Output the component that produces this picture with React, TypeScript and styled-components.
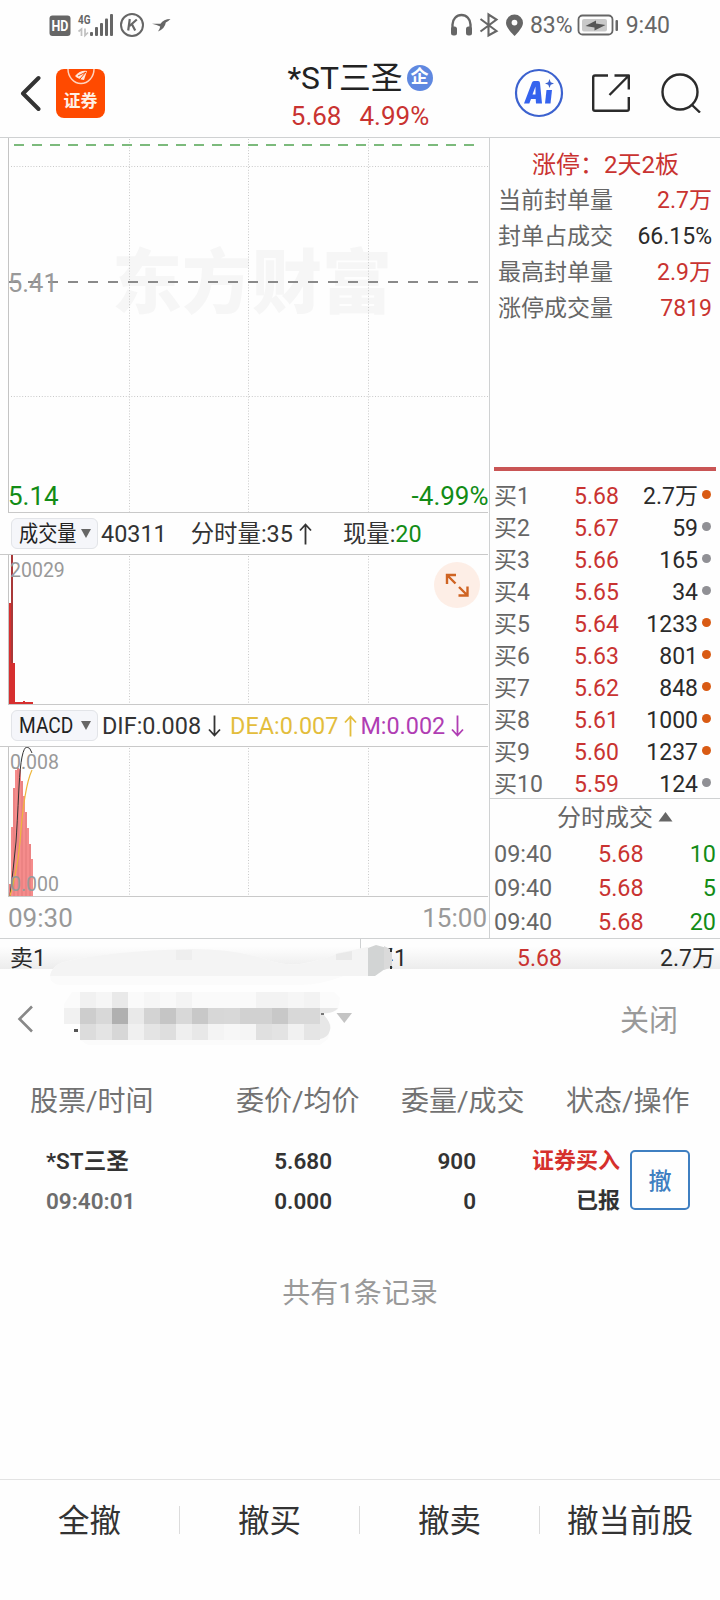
import React from "react";
import styled, { createGlobalStyle } from "styled-components";

const RED = "#c93331";
const GREEN = "#128c16";
const INK = "#2b2b2b";
const GRAY = "#666";
const LINE = "#cfd1d2";

const GlobalStyle = createGlobalStyle`
  *, *::before, *::after { box-sizing: border-box; }
  body {
    margin: 0;
    background: #fefefe;
    color: ${INK};
    font-family: Roboto, "Noto Sans CJK SC", sans-serif;
  }
  svg { display: block; flex: none; }
`;

const Screen = styled.main`
  width: 720px;
  height: 1600px;
  display: flex;
  flex-direction: column;
  overflow: hidden;
  background: #fefefe;
  white-space: nowrap;
`;

/* Status bar */
const StatusBar = styled.div`
  height: 48px;
  display: flex;
  align-items: center;
  justify-content: space-between;
  padding: 2px 50px 0 49px;
  color: #666;
  font-size: 23px;
  line-height: 24px;
`;
const StatusGroup = styled.div`
  display: flex;
  align-items: center;
`;
const StatusText = styled.span<{ $before: number; $after?: number }>`
  margin-left: ${(p) => p.$before}px;
  margin-right: ${(p) => p.$after ?? 0}px;
  padding-top: 1px;
`;

/* Title bar */
const TitleBar = styled.header`
  height: 90px;
  display: grid;
  grid-template-columns: 240px 240px 240px;
  border-bottom: 1px solid ${LINE};
`;
const TitleLeft = styled.div`
  display: flex;
  align-items: center;
  gap: 15px;
  padding: 2px 0 0 19px;
`;
const BrandTile = styled.div`
  width: 49px;
  height: 49px;
  border-radius: 8px;
  background: #ff4a00;
  overflow: hidden;
  display: flex;
  flex-direction: column;
  align-items: center;
  color: #fff;
`;
const BrandName = styled.span`
  font: 700 17px/20px "Noto Sans CJK SC", sans-serif;
  margin-top: 4px;
  color: #fff0e6;
`;
const TitleCenter = styled.div`
  display: flex;
  flex-direction: column;
  align-items: center;
  padding-top: 11px;
`;
const StockName = styled.div`
  display: flex;
  align-items: center;
  gap: 4px;
  height: 38px;
  font-size: 31.8px;
  line-height: 38px;
  color: #222;
`;
const EntBadge = styled.span`
  width: 26px;
  height: 26px;
  border-radius: 50%;
  background: #5f88e0;
  color: #fff;
  font-size: 18px;
  font-weight: 700;
  line-height: 24px;
  text-align: center;
`;
const Quote = styled.div`
  display: flex;
  gap: 18px;
  margin-top: 4px;
  font-size: 26px;
  line-height: 31px;
  color: ${RED};
`;
const TitleRight = styled.div`
  display: flex;
  align-items: center;
  justify-content: flex-end;
  padding-right: 19px;
`;
const IconSlot = styled.span<{ $right: number }>`
  margin-right: ${(p) => p.$right}px;
`;

/* Market area */
const Market = styled.section`
  height: 801px;
  display: grid;
  grid-template-columns: 490px 230px;
  border-bottom: 1px solid ${LINE};
`;
const ChartColumn = styled.div`
  display: flex;
  flex-direction: column;
  border-right: 1px solid ${LINE};
`;
const ChartPane = styled.div<{ $height: number }>`
  position: relative;
  height: ${(p) => p.$height}px;
  margin-left: 8px;
  margin-right: 1px;
  border-left: 1px solid #c4c4c4;
  border-bottom: 1px solid #c9c9c9;
`;
const Overlay = styled.span<{ $size: number; $color: string; $top?: number; $bottom?: number; $right?: boolean }>`
  position: absolute;
  ${(p) => (p.$right ? "right: -0.5px;" : p.$size > 20 ? "left: -1px;" : "left: 1px;")}
  ${(p) => (p.$top !== undefined ? `top: ${p.$top}px;` : "")}
  ${(p) => (p.$bottom !== undefined ? `bottom: ${p.$bottom}px;` : "")}
  font-size: ${(p) => p.$size}px;
  line-height: ${(p) => Math.round(p.$size + 3)}px;
  color: ${(p) => p.$color};
`;
const Watermark = styled.span`
  position: absolute;
  left: 103px;
  top: 101px;
  font-size: 70px;
  font-weight: 900;
  line-height: 90px;
  color: #f6f6f6;
`;
const Drawing = styled.svg`
  position: relative;
`;
const ExpandButton = styled.button`
  position: absolute;
  right: 8px;
  top: 7px;
  width: 46px;
  height: 46px;
  border: 0;
  border-radius: 50%;
  background: #fdeee6;
  padding: 11px;
`;
const IndicatorBar = styled.div<{ $height: number }>`
  height: ${(p) => p.$height}px;
  display: flex;
  align-items: center;
  padding-left: 11px;
  font-size: 23.4px;
  line-height: 28px;
  color: #333;
  margin-right: 1px;
  border-bottom: 1px solid #c9c9c9;
`;
const Picker = styled.div`
  width: 87px;
  height: 31px;
  border: 1px solid #e2e4e8;
  border-radius: 6px;
  background: #f5f6fa;
  display: flex;
  align-items: center;
  justify-content: space-between;
  padding: 0 6px 0 7px;
  color: #222;
`;
const PickerLabel = styled.span`
  width: 57px;
  font-size: 22px;
  line-height: 28px;
  transform: scaleX(0.87);
  transform-origin: left center;
`;
const Reading = styled.span<{ $left: number; $color?: string }>`
  display: flex;
  align-items: center;
  margin-left: ${(p) => p.$left}px;
  color: ${(p) => p.$color ?? "#333"};
`;
const TimeAxis = styled.div`
  display: flex;
  justify-content: space-between;
  padding: 6px 2px 0 8px;
  font-size: 26px;
  line-height: 30px;
  color: #999;
`;

/* Right column */
const SideColumn = styled.div`
  display: flex;
  flex-direction: column;
  font-size: 23px;
`;
const LimitPanel = styled.div`
  height: 333px;
  margin: 0 4px;
  padding: 9px 4px 0 4px;
  border-bottom: 4px solid #c95555;
`;
const LimitTitle = styled.div`
  height: 36px;
  line-height: 36px;
  font-size: 24px;
  padding-left: 34px;
  color: ${RED};
`;
const LimitRow = styled.div`
  height: 36px;
  line-height: 36px;
  display: flex;
  justify-content: space-between;
  color: ${GRAY};
`;
const Value = styled.span<{ $color?: string }>`
  color: ${(p) => p.$color ?? INK};
`;
const Book = styled.div`
  height: 328px;
  padding: 10px 8px 0 4px;
  border-bottom: 1px solid ${LINE};
`;
const BookRow = styled.div`
  height: 32px;
  display: grid;
  grid-template-columns: 80px 50px 1fr 14px;
  line-height: 32px;
  color: ${GRAY};
`;
const RightValue = styled.span<{ $color?: string }>`
  text-align: right;
  color: ${(p) => p.$color ?? INK};
`;
const Dot = styled.i<{ $hot: boolean }>`
  width: 9px;
  height: 9px;
  border-radius: 50%;
  justify-self: end;
  align-self: center;
  margin-bottom: 5px;
  margin-right: 1px;
  background: ${(p) => (p.$hot ? "#d95b14" : "#909095")};
`;
const TicksTitle = styled.div`
  height: 38px;
  display: flex;
  align-items: center;
  gap: 5px;
  padding: 0 0 0 67px;
  font-size: 24px;
  line-height: 32px;
  color: ${GRAY};
`;
const TickRow = styled.div`
  height: 34px;
  display: grid;
  grid-template-columns: 104px 50px 1fr;
  padding: 0 4px 0 4px;
  font-size: 23.4px;
  line-height: 35px;
  color: ${GRAY};
`;

/* Best bid/ask strip */
const BestStrip = styled.div`
  position: relative;
  height: 30px;
  display: grid;
  grid-template-columns: 360px 360px;
  font-size: 23px;
  line-height: 20px;
  background: linear-gradient(#fefefe 25%, #ececec);
`;
const BestHalf = styled.div<{ $divider?: boolean }>`
  height: 30px;
  display: grid;
  grid-template-columns: 146px 1fr auto;
  padding: 10px 5px 0 10px;
  border-left: ${(p) => (p.$divider ? `1px solid ${LINE}` : "0")};
`;
const Redaction = styled.svg`
  position: absolute;
  left: 0;
  top: 0;
`;

/* Order sheet */
const Sheet = styled.section`
  flex: 1;
  display: flex;
  flex-direction: column;
`;
const SheetHeader = styled.div`
  height: 103px;
  display: flex;
  justify-content: flex-end;
  padding: 0 42px 0 0;
`;
const CloseButton = styled.span`
  font-size: 29px;
  line-height: 104px;
  color: #999;
`;
const OrderHead = styled.div`
  height: 59px;
  display: flex;
  padding: 0 31px 0 30px;
  font-size: 28px;
  line-height: 60px;
  color: #727272;
`;
const HeadCell = styled.span<{ $width: number }>`
  width: ${(p) => p.$width}px;
`;
const OrderRow = styled.div`
  height: 100px;
  display: grid;
  grid-template-columns: 200px 86px 144px 144px 10px 60px;
  padding: 10px 30px 0 46px;
  font-size: 22.5px;
  font-weight: 600;
  line-height: 40px;
  color: #333;
`;
const OrderCell = styled.div<{ $right?: boolean }>`
  display: flex;
  flex-direction: column;
  align-items: ${(p) => (p.$right ? "flex-end" : "flex-start")};
`;
const OrderTime = styled.span`
  color: #6d6d6d;
`;
const OrderSide = styled.span`
  color: #d5302c;
  font-size: 22px;
`;
const OrderState = styled.span`
  font-size: 22px;
`;
const CancelButton = styled.button`
  grid-column: 6;
  width: 60px;
  height: 60px;
  margin-top: 9px;
  padding: 0 0 3px;
  border: 2px solid #3f7fc1;
  border-radius: 5px;
  background: transparent;
  color: #3f7fc1;
  font: 500 23px/30px "Noto Sans CJK SC", sans-serif;
`;
const Summary = styled.p`
  margin: 43px 0 0;
  text-align: center;
  font-size: 28px;
  line-height: 40px;
  color: #999;
`;
const ActionBar = styled.nav`
  height: 121px;
  margin-top: auto;
  display: grid;
  grid-template-columns: repeat(4, 180px);
  align-items: start;
  padding-top: 26px;
  border-top: 1px solid #e3e3e3;
`;
const Action = styled.span<{ $last?: boolean }>`
  height: 28px;
  font-size: 31.5px;
  line-height: 32px;
  text-align: center;
  color: #333;
  border-right: ${(p) => (p.$last ? "0" : "1px solid #dcdcdc")};
`;

const limitRows = [
  { label: "当前封单量", value: "2.7万", color: RED },
  { label: "封单占成交", value: "66.15%", color: INK },
  { label: "最高封单量", value: "2.9万", color: RED },
  { label: "涨停成交量", value: "7819", color: RED },
];

const bids: [string, string, boolean][] = [
  ["5.68", "2.7万", true],
  ["5.67", "59", false],
  ["5.66", "165", false],
  ["5.65", "34", false],
  ["5.64", "1233", true],
  ["5.63", "801", true],
  ["5.62", "848", true],
  ["5.61", "1000", true],
  ["5.60", "1237", true],
  ["5.59", "124", false],
];

const ticks: [string, string, string][] = [
  ["09:40", "5.68", "10"],
  ["09:40", "5.68", "5"],
  ["09:40", "5.68", "20"],
];

const macdBars = [12, 69, 108, 126, 128, 127, 115, 100, 84, 68, 52, 37];

const mosaic: string[][] = [
  ["#f1f1f1", "#f6f6f6", "#e9e9e9", "#fafafa", "#f6f6f6", "#f9f9f9", "#f4f4f4", "#fafafa", "#fafafa", "#fafafa", "#fafafa", "#f3f3f3", "#f3f3f3", "#f6f6f6", "#f3f3f3"],
  ["#cdcdcd", "#d8d8d8", "#b0b0b0", "#e9e9e9", "#d3d3d3", "#c5c5c5", "#d8d8d8", "#c8c8c8", "#d7d7d7", "#d8d8d8", "#d1d1d1", "#d1d1d1", "#c8c8c8", "#d8d8d8", "#d8d8d8"],
  ["#dcdcdc", "#e4e4e4", "#d7d7d7", "#f0f0f0", "#e4e4e4", "#dedede", "#efefef", "#e8e8e8", "#f4f4f4", "#f7f7f7", "#f5f5f5", "#e0e0e0", "#e3e3e3", "#f1f1f1", "#e5e5e5"],
];

function Grid({ height, rows = [] }: { height: number; rows?: number[] }) {
  return (
    <g stroke="#c9c9c9" strokeDasharray="1 1.8" fill="none">
      {[120.5, 239.5, 359.5].map((x) => (
        <path key={x} d={`M${x} 1V${height}`} />
      ))}
      {rows.map((y) => (
        <path key={y} d={`M2 ${y}H479`} />
      ))}
    </g>
  );
}

function Arrow({ up, left, color }: { up?: boolean; left: number; color: string }) {
  return (
    <svg width={13 + left} height="22" viewBox={`${-left} 0 ${13 + left} 22`} fill="none" stroke={color} strokeWidth="1.8">
      <path d={up ? "M6.5 21.5V1.5M1 7.500L6.5 1.5L12 7.500" : "M6.5 0.5V20.5M1 14.500L6.5 20.5L12 14.500"} />
    </svg>
  );
}

function DownCaret() {
  return (
    <svg width="10" height="9" viewBox="0 0 10 9">
      <path d="M0 0H10L5 9Z" fill="#666" />
    </svg>
  );
}

function StatusLeftIcons() {
  return (
    <svg width="124" height="26" viewBox="49 11 124 26">
      <rect x="49.500" y="14.500" width="21" height="20.500" rx="3" fill="#666" />
      <text x="60" y="30" fontSize="14" fontWeight="700" textAnchor="middle" fill="#fff" textLength="17" lengthAdjust="spacingAndGlyphs">HD</text>
      <text x="78" y="23" fontSize="13" fontWeight="700" fill="#666" textLength="12.500" lengthAdjust="spacingAndGlyphs">4G</text>
      <path d="M78.500 30.500L81.500 28V35M85 27.500V34.500L88 31.500" fill="none" stroke="#c0c0c0" strokeWidth="1.700" />
      <g fill="#666">
        <rect x="90" y="31" width="3" height="4" rx="1" />
        <rect x="95" y="26" width="3" height="9" rx="1" />
        <rect x="100" y="22" width="3" height="13" rx="1" />
        <rect x="105" y="17.500" width="3" height="17.500" rx="1" />
        <rect x="110" y="13" width="3" height="22" rx="1" />
      </g>
      <circle cx="132" cy="24" r="11" fill="none" stroke="#666" strokeWidth="2" />
      <path d="M129.800 18L128.200 29.500M136.800 18.500L129.500 25M131.800 23L135.200 29.500" fill="none" stroke="#666" strokeWidth="2.200" />
      <path d="M152 22.800H160.500Q163.500 18.200 170.500 18Q168.500 20 165.800 21.500Q165 27.500 158 30.500Q160 27.500 160.200 25.500Q157 24 152 22.800Z" fill="#666" />
    </svg>
  );
}

function StatusRightIcons() {
  return (
    <svg width="74" height="26" viewBox="452 11 74 26" fill="none" stroke="#666">
      <path d="M453.500 28V23.500a9 9.500 0 0 1 18 0V28" strokeWidth="2.400" />
      <rect x="452" y="25.500" width="6" height="9" rx="2.500" fill="#666" stroke="none" />
      <rect x="467" y="25.500" width="6" height="9" rx="2.500" fill="#666" stroke="none" />
      <path d="M481.500 18L497.500 30L489.500 34.500V13.500L497.500 18.500L481.500 30.500" strokeWidth="2.100" />
      <path fillRule="evenodd" d="M515.500 13.500a8.500 8.500 0 0 1 8.500 8.500c0 5-8.500 13-8.500 13s-8.500-8-8.500-13a8.500 8.500 0 0 1 8.500-8.500Zm0 5.200a2.900 2.900 0 1 0 0 5.800a2.900 2.900 0 0 0 0-5.800Z" fill="#666" stroke="none" />
    </svg>
  );
}

function Battery() {
  return (
    <svg width="41" height="22" viewBox="577 13 41 22">
      <rect x="578.500" y="14.500" width="34" height="19" rx="4" fill="none" stroke="#666" strokeWidth="1.800" />
      <rect x="582" y="18" width="25" height="12.500" rx="2" fill="#c9c9c9" />
      <path d="M585.500 25L596 19.500V22.500L605.500 24L594.500 29.500V26.500Z" fill="#555" />
      <rect x="615.500" y="19" width="2.500" height="11" rx="1" fill="#666" />
    </svg>
  );
}

function RedactionMarks() {
  return (
    <Redaction width="420" height="110" viewBox="0 939 420 110">
      <path d="M50 976Q52 964 68 961Q110 951 190 949Q232 949 262 958Q282 966 300 964Q325 960 338 953L368 947V976H344Q320 985 300 985H60Q50 984 50 976Z" fill="#fbfbfb" />
      <path d="M50 976Q52 964 68 961Q110 951 190 949Q232 949 262 958Q282 966 300 964Q325 960 338 953L368 947V976Z" fill="#f4f4f4" />
      <rect x="176" y="950" width="16" height="10" fill="#eeeeee" />
      <path d="M336 954L352 951V960H336Z" fill="#e9e9e9" />
      <path d="M368 948L376 945L387 948L392 955V964L375 976H368Z" fill="#d2d4d4" />
      <path d="M384 946L392 950V967L384 970Z" fill="#dadada" />
      <rect x="390" y="949" width="2" height="3" fill="#333" />
      <rect x="390" y="966" width="2" height="3" fill="#333" />
      <path d="M64 1007V1004L72 992H334L340 998L338 1010L324 1015L331 1025L328 1039L320 1045H88L80 1040V1024H64Z" fill="#fbfbfb" />
      <rect x="64" y="1008" width="16" height="16" fill="#f1f1f1" />
      {mosaic.map((row, r) =>
        row.map((fill, c) => <rect key={`${r}-${c}`} x={80 + c * 16} y={992 + r * 16} width="16" height="16" fill={fill} />)
      )}
      <path d="M320 1008H338Q334 1014 322 1013Q332 1023 330 1030Q328 1038 320 1039Z" fill="#e7e7e7" />
      <rect x="74" y="1029" width="4" height="3" fill="#555" />
      <rect x="321" y="1013" width="3" height="2" fill="#777" />
      <path d="M336.500 1013H352L344.300 1023Z" fill="#c4c4c4" />
      <path d="M32 1006.500L19.500 1019L32 1031.500" fill="none" stroke="#888" strokeWidth="2.600" />
    </Redaction>
  );
}

export default function App() {
  return (
    <Screen>
      <GlobalStyle />
      <StatusBar>
        <StatusGroup>
          <StatusLeftIcons />
        </StatusGroup>
        <StatusGroup>
          <StatusRightIcons />
          <StatusText $before={5} $after={4}>83%</StatusText>
          <Battery />
          <StatusText $before={8}>9:40</StatusText>
        </StatusGroup>
      </StatusBar>

      <TitleBar>
        <TitleLeft>
          <svg width="22" height="38" viewBox="0 0 22 38" fill="none" stroke="#333" strokeWidth="4" strokeLinecap="round" strokeLinejoin="round">
            <path d="M19.500 3L4 18.500L19.500 34" />
          </svg>
          <BrandTile>
            <svg width="30" height="17" viewBox="0 0 30 17" fill="none">
              <path d="M2 0A13 14.500 0 0 0 28 0" stroke="#ffd2bd" strokeWidth="1.500" />
              <path d="M9 7Q14 1 21 2L18 11Q12 10 9 7Z" fill="#ffe6da" />
              <path d="M12 7L20 3M14 10L20 3" stroke="#ff4a00" />
            </svg>
            <BrandName>证券</BrandName>
          </BrandTile>
        </TitleLeft>
        <TitleCenter>
          <StockName>
            <span>*ST三圣</span>
            <EntBadge>企</EntBadge>
          </StockName>
          <Quote>
            <span>5.68</span>
            <span>4.99%</span>
          </Quote>
        </TitleCenter>
        <TitleRight>
          <IconSlot $right={27}>
            <svg width="50" height="50" viewBox="0 0 50 50">
              <circle cx="25" cy="25" r="23" fill="none" stroke="#3c62cf" strokeWidth="2.200" />
              <path d="M10 35.500L18 14.500Q18.500 13 20 13H24Q26 13 26 15L28 35.500H22L21.700 31H17L15.300 35.500ZM18.500 26.500H21.500V18.500Z" fill="#3563ee" />
              <path d="M32.500 22H38L36.500 35.500H31Z" fill="#3563ee" />
              <path d="M35.500 11L36.700 14.300L40 15.500L36.700 16.700L35.500 20L34.300 16.700L31 15.500L34.300 14.300Z" fill="#3c62cf" />
            </svg>
          </IconSlot>
          <IconSlot $right={29}>
            <svg width="40" height="40" viewBox="0 0 40 40" fill="none" stroke="#2b2b2b" strokeWidth="2.400" strokeLinejoin="round">
              <path d="M17 2.500H4Q2.200 2.500 2.200 4.300V36Q2.200 37.800 4 37.800H36Q37.800 37.800 37.800 36V24" />
              <path d="M23.500 2.500H37.800V16.500M37.800 2.500L18.500 22" />
            </svg>
          </IconSlot>
          <svg width="41" height="40" viewBox="0 0 41 40" fill="none" stroke="#2b2b2b" strokeWidth="2.400">
            <circle cx="20" cy="19" r="17.500" />
            <path d="M31.500 31.500L40 39.500" />
          </svg>
        </TitleRight>
      </TitleBar>

      <Market>
        <ChartColumn>
          <ChartPane $height={375}>
            <Watermark>东方财富</Watermark>
            <Drawing width="480" height="374" viewBox="0 0 480 374">
              <Grid height={374} rows={[28.5, 258.5]} />
              <path d="M5 7H466" stroke="#7cba7c" strokeWidth="2" strokeDasharray="10 8" />
              <path d="M-1 144H470" stroke="#8a8a8a" strokeWidth="2" strokeDasharray="10 10" />
            </Drawing>
            <Overlay $size={25.5} $color="#999" $top={131}>5.41</Overlay>
            <Overlay $size={26} $color={GREEN} $bottom={1}>5.14</Overlay>
            <Overlay $size={26} $color={GREEN} $bottom={1} $right>-4.99%</Overlay>
          </ChartPane>
          <IndicatorBar $height={42}>
            <Picker>
              <PickerLabel>成交量</PickerLabel>
              <DownCaret />
            </Picker>
            <Reading $left={3}>40311</Reading>
            <Reading $left={24}>分时量:35<Arrow up left={6} color="#333" /></Reading>
            <Reading $left={31}>现量:<Value $color={GREEN}>20</Value></Reading>
          </IndicatorBar>
          <ChartPane $height={150}>
            <Drawing width="480" height="149" viewBox="0 0 480 149">
              <Grid height={149} />
              <path d="M2 0H4V108H6V147H24V149H0V48H2Z" fill="#d62f2f" />
              <path d="M2 0H4V108H2Z" fill="#a83838" />
              <rect x="14" y="146" width="2" height="2" fill="#d62f2f" />
            </Drawing>
            <Overlay $size={19.5} $color="#999" $top={4}>20029</Overlay>
            <ExpandButton aria-label="放大">
              <svg width="24" height="24" viewBox="0 0 24 24" fill="none" stroke="#cf6423" strokeWidth="2.400">
                <path d="M11 2H2V11M2 2L10.500 10.500M13.500 22.500H22.500V13.500M22.500 22.500L14 14" />
              </svg>
            </ExpandButton>
          </ChartPane>
          <IndicatorBar $height={42}>
            <Picker>
              <PickerLabel>MACD</PickerLabel>
              <DownCaret />
            </Picker>
            <Reading $left={4}>DIF:0.008<Arrow left={7} color="#333" /></Reading>
            <Reading $left={9} $color="#e3bd3c">DEA:0.007<Arrow up left={6} color="#e3bd3c" /></Reading>
            <Reading $left={3} $color="#b03db3">M:0.002<Arrow left={6} color="#b03db3" /></Reading>
          </IndicatorBar>
          <ChartPane $height={150}>
            <Drawing width="480" height="149" viewBox="0 0 480 149">
              <Grid height={149} />
              {macdBars.map((h, i) => (
                <rect key={i} x={i * 2} y={149 - h} width="2" height={h} fill={i % 2 ? "#f58c8c" : "#ec8383"} />
              ))}
              <path d="M1 149Q4 125 7 95Q8 80 10 40Q12 0 18 0Q21 0 23 6" fill="none" stroke="#333" />
              <path d="M1 149Q8 125 11 95Q15 40 23 23" fill="none" stroke="#eeb73c" strokeWidth="1.200" />
            </Drawing>
            <Overlay $size={19.5} $color="#999" $top={4}>0.008</Overlay>
            <Overlay $size={19.5} $color="#999" $bottom={0}>0.000</Overlay>
          </ChartPane>
          <TimeAxis>
            <span>09:30</span>
            <span>15:00</span>
          </TimeAxis>
        </ChartColumn>

        <SideColumn>
          <LimitPanel>
            <LimitTitle>涨停：2天2板</LimitTitle>
            {limitRows.map((row) => (
              <LimitRow key={row.label}>
                <span>{row.label}</span>
                <Value $color={row.color}>{row.value}</Value>
              </LimitRow>
            ))}
          </LimitPanel>
          <Book>
            {bids.map(([price, amount, hot], i) => (
              <BookRow key={price}>
                <span>买{i + 1}</span>
                <Value $color={RED}>{price}</Value>
                <RightValue>{amount}</RightValue>
                <Dot $hot={hot} />
              </BookRow>
            ))}
          </Book>
          <TicksTitle>
            分时成交
            <svg width="15" height="15" viewBox="0 0 15 15">
              <path d="M0.500 10.500H14.500L7.500 1Z" fill="#666" />
            </svg>
          </TicksTitle>
          {ticks.map(([time, price, amount], i) => (
            <TickRow key={i}>
              <span>{time}</span>
              <Value $color={RED}>{price}</Value>
              <RightValue $color={GREEN}>{amount}</RightValue>
            </TickRow>
          ))}
        </SideColumn>
      </Market>

      <BestStrip>
        <BestHalf>
          <span>卖1</span>
        </BestHalf>
        <BestHalf $divider>
          <span>买1</span>
          <Value $color={RED}>5.68</Value>
          <RightValue>2.7万</RightValue>
        </BestHalf>
        <RedactionMarks />
      </BestStrip>

      <Sheet>
        <SheetHeader>
          <CloseButton>关闭</CloseButton>
        </SheetHeader>
        <OrderHead>
          <HeadCell $width={206}>股票/时间</HeadCell>
          <HeadCell $width={165}>委价/均价</HeadCell>
          <HeadCell $width={165}>委量/成交</HeadCell>
          <HeadCell $width={123}>状态/操作</HeadCell>
        </OrderHead>
        <OrderRow>
          <OrderCell>
            <span>*ST三圣</span>
            <OrderTime>09:40:01</OrderTime>
          </OrderCell>
          <OrderCell $right>
            <span>5.680</span>
            <span>0.000</span>
          </OrderCell>
          <OrderCell $right>
            <span>900</span>
            <span>0</span>
          </OrderCell>
          <OrderCell $right>
            <OrderSide>证券买入</OrderSide>
            <OrderState>已报</OrderState>
          </OrderCell>
          <CancelButton>撤</CancelButton>
        </OrderRow>
        <Summary>共有1条记录</Summary>
        <ActionBar>
          <Action>全撤</Action>
          <Action>撤买</Action>
          <Action>撤卖</Action>
          <Action $last>撤当前股</Action>
        </ActionBar>
      </Sheet>
    </Screen>
  );
}
